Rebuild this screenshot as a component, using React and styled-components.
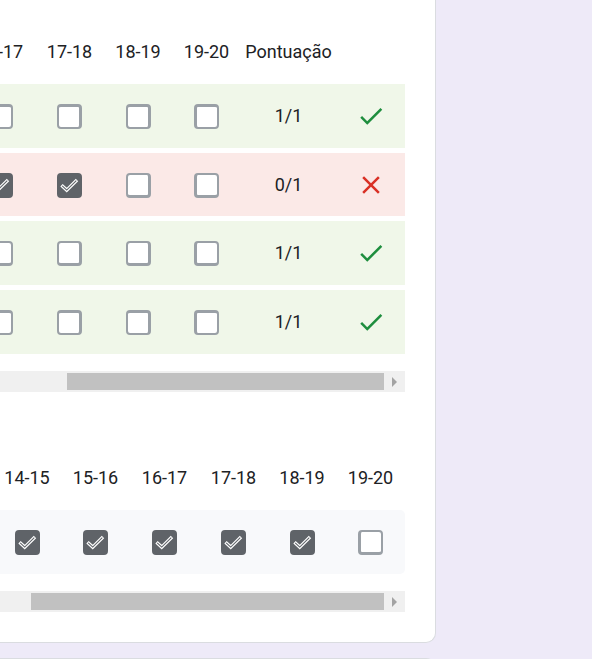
import React from "react";
import styled, { createGlobalStyle } from "styled-components";

const GlobalStyle = createGlobalStyle`
  * { box-sizing: border-box; }
  body {
    margin: 0;
    background: #eeeaf8;
    color: #202124;
    font-family: Roboto, "Liberation Sans", sans-serif;
    font-size: 18px;
    line-height: 24px;
  }
`;

const Page = styled.main`
  display: flex;
  flex-direction: column;
  gap: 15px;
  height: 100vh;
  overflow: hidden;
  padding-right: 156px;
`;

const Card = styled.section`
  flex: none;
  background: #fff;
  border: solid #dadce0;
  border-width: 0 1px 1px 0;
  border-radius: 0 0 10px 0;
  padding: 20px 30px 30px 0;
`;

const NextCard = styled.section`
  flex: none;
  height: 80px;
  background: #fff;
  border: solid #dadce0;
  border-width: 1px 1px 0 0;
  border-radius: 0 10px 0 0;
`;

const Question = styled.div`
  & + & {
    margin-top: 54px;
  }
`;

const Viewport = styled.div`
  display: flex;
  justify-content: flex-end;
  overflow: hidden;
`;

const Grid = styled.table`
  flex: none;
  width: ${(p) => p.$width}px;
  table-layout: fixed;
  border-collapse: separate;
  border-spacing: 0 5px;
`;

const Column = styled.col`
  width: ${(p) => p.$width}px;
`;

const HeadCell = styled.th`
  height: 54px;
  padding: 0;
  font-weight: 400;
  text-align: center;
  white-space: nowrap;
`;

const tones = { right: "#f0f7e9", wrong: "#fbe9e7", plain: "#f8f9fb" };

const AnswerRow = styled.tr`
  height: ${(p) => (p.$tone === "wrong" ? 63 : 64)}px;
  background: ${(p) => tones[p.$tone]};
`;

const Cell = styled.td`
  padding: 0;
  text-align: center;
  vertical-align: middle;

  &:last-child {
    border-radius: ${(p) => (p.$rounded ? "0 5px 5px 0" : "0")};
  }
`;

const BoxCell = styled(Cell)`
  padding-top: 1px;
`;

const BoxLabel = styled.label`
  display: inline-grid;
  vertical-align: middle;

  & > * {
    grid-area: 1 / 1;
  }
`;

const BoxInput = styled.input`
  appearance: none;
  width: 25px;
  height: 25px;
  margin: 0;
  border: 2px solid #9aa0a6;
  border-${(p) => p.$heavyY}-width: 3px;
  border-${(p) => p.$heavyX}-width: 3px;
  border-radius: 4px;
  background: #fff;

  &:checked {
    border-color: #5f6368;
    background: #5f6368;
  }
`;

const TickDrawing = styled.svg`
  display: block;
  width: 25px;
  height: 25px;
  pointer-events: none;
`;

const Mark = styled.svg`
  display: block;
  width: 30px;
  height: 30px;
  margin: 0 auto;
  fill: ${(p) => (p.$ok ? "#1e8e3e" : "#d93025")};
`;

const ScrollTrack = styled.div`
  display: flex;
  align-items: center;
  height: 21px;
  margin-top: 12px;
  padding-left: ${(p) => p.$start}px;
  background: #f0f0f0;
`;

const ScrollThumb = styled.div`
  flex: 1;
  height: 17px;
  background: #c1c1c1;
`;

const ScrollButton = styled.button`
  display: grid;
  place-items: center;
  width: 21px;
  height: 21px;
  padding: 0;
  border: 0;
  background: transparent;
`;

function Checkbox({ label, checked, heavyX, heavyY }) {
  return (
    <BoxLabel>
      <BoxInput
        type="checkbox"
        aria-label={label}
        checked={checked}
        readOnly
        $heavyX={heavyX}
        $heavyY={heavyY}
      />
      {checked && (
        <TickDrawing viewBox="0 0 25 25" fill="none" aria-hidden="true">
          <path d="M4.5 12.3 9.7 17.1 20 7" stroke="#fff" strokeWidth="3.4" />
          <path d="M5.2 12.9 9.7 17.1 19.3 7.7" stroke="#5f6368" strokeWidth="1.1" />
        </TickDrawing>
      )}
    </BoxLabel>
  );
}

function ResultMark({ ok }) {
  return (
    <Mark viewBox="0 0 24 24" $ok={ok} role="img" aria-label={ok ? "Correto" : "Incorreto"}>
      <path
        d={
          ok
            ? "M9 16.17 4.83 12l-1.42 1.41L9 19 21 7l-1.41-1.41z"
            : "M19 6.41 17.59 5 12 10.59 6.41 5 5 6.41 10.59 12 5 17.59 6.41 19 12 13.41 17.59 19 19 17.59 13.41 12z"
        }
      />
    </Mark>
  );
}

function ScrollBar({ start }) {
  return (
    <ScrollTrack $start={start}>
      <ScrollThumb />
      <ScrollButton type="button" aria-label="Rolar para a direita">
        <svg width="5" height="10" viewBox="0 0 5 10" aria-hidden="true">
          <path d="M0 0 5 5 0 10z" fill="#a3a3a3" />
        </svg>
      </ScrollButton>
    </ScrollTrack>
  );
}

function AnswerGrid({ columns, rows, scored, scrollStart }) {
  const total = columns.reduce((sum, c) => sum + c.width, 0) + (scored ? 164 : 0);
  return (
    <Question>
      <Viewport>
        <Grid $width={total}>
          <colgroup>
            {columns.map((c) => (
              <Column key={c.label} $width={c.width} />
            ))}
            {scored && <Column $width={95} />}
            {scored && <Column $width={69} />}
          </colgroup>
          <thead>
            <tr>
              {columns.map((c) => (
                <HeadCell key={c.label} scope="col">{c.label}</HeadCell>
              ))}
              {scored && <HeadCell scope="col">Pontuação</HeadCell>}
              {scored && <HeadCell as="td" />}
            </tr>
          </thead>
          <tbody>
            {rows.map((row, i) => (
              <AnswerRow key={i} $tone={row.tone}>
                {columns.map((c) => (
                  <BoxCell key={c.label} $rounded={!scored}>
                    <Checkbox
                      label={c.label}
                      checked={row.checked.includes(c.label)}
                      heavyX={c.heavy}
                      heavyY={row.heavy}
                    />
                  </BoxCell>
                ))}
                {scored && <Cell>{row.score}</Cell>}
                {scored && (
                  <Cell>
                    <ResultMark ok={row.tone === "right"} />
                  </Cell>
                )}
              </AnswerRow>
            ))}
          </tbody>
        </Grid>
      </Viewport>
      <ScrollBar start={scrollStart} />
    </Question>
  );
}

const scoredColumns = [
  { label: "16-17", width: 69, heavy: "left" },
  { label: "17-18", width: 69, heavy: "right" },
  { label: "18-19", width: 68, heavy: "right" },
  { label: "19-20", width: 69, heavy: "left" },
];

const scoredRows = [
  { tone: "right", score: "1/1", checked: [], heavy: "top" },
  { tone: "wrong", score: "0/1", checked: ["16-17", "17-18"], heavy: "bottom" },
  { tone: "right", score: "1/1", checked: [], heavy: "bottom" },
  { tone: "right", score: "1/1", checked: [], heavy: "top" },
];

const keyColumns = [
  { label: "14-15", width: 68, heavy: "left" },
  { label: "15-16", width: 69, heavy: "left" },
  { label: "16-17", width: 69, heavy: "left" },
  { label: "17-18", width: 69, heavy: "left" },
  { label: "18-19", width: 68, heavy: "left" },
  { label: "19-20", width: 69, heavy: "left" },
];

const keyRows = [
  { tone: "plain", checked: ["14-15", "15-16", "16-17", "17-18", "18-19"], heavy: "bottom" },
];

export default function App() {
  return (
    <Page>
      <GlobalStyle />
      <Card>
        <AnswerGrid columns={scoredColumns} rows={scoredRows} scored scrollStart={67} />
        <AnswerGrid columns={keyColumns} rows={keyRows} scrollStart={31} />
      </Card>
      <NextCard />
    </Page>
  );
}
